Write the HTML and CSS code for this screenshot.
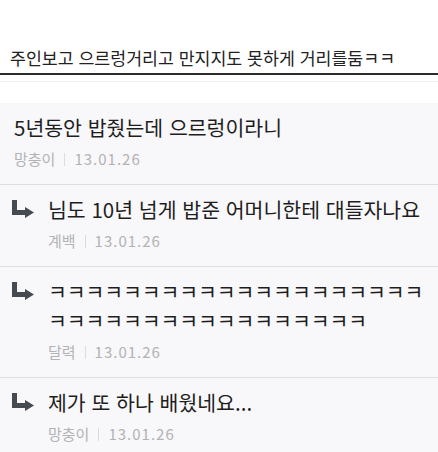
FILE: index.html
```html
<!DOCTYPE html>
<html lang="ko">

<head>
    <meta charset="UTF-8">
    <meta name="viewport" content="width=device-width, initial-scale=1.0">
    <title>댓글</title>
    <link rel="stylesheet" href="styles.css">
</head>

<body>
    <div class="post-head">
        <h1 class="post-title">주인보고 으르렁거리고 만지지도 못하게 거리를둠ㅋㅋ</h1>
    </div>

    <ul class="comments">
        <li class="comment">
            <div class="body">
                <p class="text">5년동안 밥줬는데 으르렁이라니</p>
                <p class="meta"><span>망충이</span><i class="bar"></i><span class="date">13.01.26</span></p>
            </div>
        </li>
        <li class="comment reply">
            <svg class="reply-icon" width="22" height="20" viewBox="0 0 22 20"><path d="M0 0H5V10H13V7L22 12.5L13 18V15H0Z" fill="#464b51"/></svg>
            <div class="body">
                <p class="text">님도 10년 넘게 밥준 어머니한테 대들자나요</p>
                <p class="meta"><span>계백</span><i class="bar"></i><span class="date">13.01.26</span></p>
            </div>
        </li>
        <li class="comment reply">
            <svg class="reply-icon" width="22" height="20" viewBox="0 0 22 20"><path d="M0 0H5V10H13V7L22 12.5L13 18V15H0Z" fill="#464b51"/></svg>
            <div class="body">
                <p class="text kk">ㅋㅋㅋㅋㅋㅋㅋㅋㅋㅋㅋㅋㅋㅋㅋㅋㅋㅋㅋㅋㅋㅋㅋㅋㅋㅋㅋㅋㅋㅋㅋㅋㅋㅋㅋㅋㅋ</p>
                <p class="meta"><span>달력</span><i class="bar"></i><span class="date">13.01.26</span></p>
            </div>
        </li>
        <li class="comment reply">
            <svg class="reply-icon" width="22" height="20" viewBox="0 0 22 20"><path d="M0 0H5V10H13V7L22 12.5L13 18V15H0Z" fill="#464b51"/></svg>
            <div class="body">
                <p class="text">제가 또 하나 배웠네요...</p>
                <p class="meta"><span>망충이</span><i class="bar"></i><span class="date">13.01.26</span></p>
            </div>
        </li>
    </ul>
</body>

</html>
```

FILE: styles.css
```css
* {
    margin: 0;
    padding: 0;
    box-sizing: border-box;
}

body {
    font-family: "Noto Sans CJK KR", "Noto Sans", sans-serif;
    background: #fff;
    color: #222;
}

/* Post header */
.post-head {
    height: 82px;
    padding-top: 47px;
    border-bottom: 1px solid #eee;
}

.post-head::after {
    content: "";
    display: block;
    height: 2px;
    background: #2b2b2b;
    margin-top: 4px;
}

.post-title {
    font-size: 17.3px;
    font-weight: 400;
    line-height: 22px;
    padding-left: 10px;
    white-space: nowrap;
}

/* Comments */
.comments {
    list-style: none;
    margin-top: 21px;
    background: #f8f7f9;
}

.comment {
    display: flex;
    padding: 10px 14px 15px;
    border-bottom: 1px solid #dedede;
}

.comment.reply {
    padding-left: 12px;
}

.reply-icon {
    flex: none;
    margin-top: 5px;
    margin-right: 14px;
}

.body {
    flex: 1;
    min-width: 0;
}

.text {
    font-size: 20.5px;
    line-height: 29px;
    color: #1e1e1e;
}

.text.kk {
    letter-spacing: -0.1px;
    word-break: break-all;
}

.meta {
    margin-top: 7px;
    font-size: 15px;
    line-height: 20px;
    color: #b3b3b5;
    display: flex;
    align-items: center;
}

.meta .date {
    letter-spacing: 1px;
}

.meta .bar {
    display: inline-block;
    width: 1px;
    height: 13px;
    background: #dcdcdc;
    margin: 0 9px;
}
```
